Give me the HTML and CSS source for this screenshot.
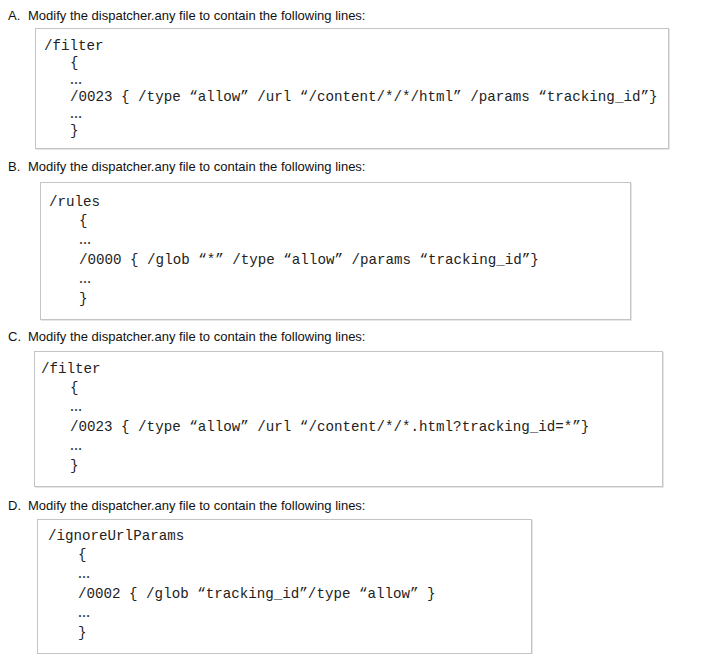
FILE: index.html
```html
<!DOCTYPE html>
<html>
<head>
<meta charset="utf-8">
<link rel="stylesheet" href="styles.css">
</head>
<body>
<div class="options">
  <div class="option option-a">
    <div class="label"><span class="letter">A.</span><span>Modify the dispatcher.any file to contain the following lines:</span></div>
    <div class="code">
      <div class="line">/filter</div>
      <div class="line in">{</div>
      <div class="line in dots">…</div>
      <div class="line in">/0023 { /type “allow” /url “/content/*/*/html” /params “tracking_id”}</div>
      <div class="line in dots">…</div>
      <div class="line in">}</div>
    </div>
  </div>
  <div class="option option-b">
    <div class="label"><span class="letter">B.</span><span>Modify the dispatcher.any file to contain the following lines:</span></div>
    <div class="code">
      <div class="line">/rules</div>
      <div class="line in">{</div>
      <div class="line in dots">…</div>
      <div class="line in">/0000 { /glob “*” /type “allow” /params “tracking_id”}</div>
      <div class="line in dots">…</div>
      <div class="line in">}</div>
    </div>
  </div>
  <div class="option option-c">
    <div class="label"><span class="letter">C.</span><span>Modify the dispatcher.any file to contain the following lines:</span></div>
    <div class="code">
      <div class="line">/filter</div>
      <div class="line in">{</div>
      <div class="line in dots">…</div>
      <div class="line in">/0023 { /type “allow” /url “/content/*/*.html?tracking_id=*”}</div>
      <div class="line in dots">…</div>
      <div class="line in">}</div>
    </div>
  </div>
  <div class="option option-d">
    <div class="label"><span class="letter">D.</span><span>Modify the dispatcher.any file to contain the following lines:</span></div>
    <div class="code">
      <div class="line">/ignoreUrlParams</div>
      <div class="line in">{</div>
      <div class="line in dots">…</div>
      <div class="line in">/0002 { /glob “tracking_id”/type “allow” }</div>
      <div class="line in dots">…</div>
      <div class="line in">}</div>
    </div>
  </div>
</div>
</body>
</html>
```
FILE: styles.css
```css
html, body {
  margin: 0;
  padding: 0;
  background: #ffffff;
}
body {
  font-family: "Liberation Sans", Arial, sans-serif;
  color: #111;
}
.options {
  padding: 9px 0 0 8px;
  display: flex;
  flex-direction: column;
}
.label {
  display: flex;
  font-size: 13px;
  line-height: 14px;
  height: 14px;
  color: #111;
}
.letter {
  width: 20px;
  flex: none;
}
.code {
  box-sizing: border-box;
  border: 1px solid #c4c4c4;
  box-shadow: 1px 1px 0 #e6e6e6;
  font-family: "Liberation Mono", "Courier New", monospace;
  font-size: 14.2px;
  color: #222;
  background: #fff;
}
.line {
  white-space: pre;
}
.dots {
  font-family: "Liberation Serif", "Times New Roman", serif;
  font-size: 12px;
  font-weight: bold;
  color: #333;
}
.option-a .code {
  margin: 5px 0 0 27px;
  width: 634px;
  height: 121px;
  padding: 9px 0 0 8px;
  line-height: 17px;
}
.option-a .in { padding-left: 26px; }
.option-b { margin-top: 11px; }
.option-b .code {
  margin: 8px 0 0 32px;
  width: 591px;
  height: 138px;
  padding: 9.5px 0 0 8px;
  line-height: 19.4px;
}
.option-b .in { padding-left: 30px; }
.option-c { margin-top: 10px; }
.option-c .code {
  margin: 7px 0 0 26px;
  width: 629px;
  height: 136px;
  padding: 7.5px 0 0 6px;
  line-height: 19.4px;
}
.option-c .in { padding-left: 29px; }
.option-d { margin-top: 12px; }
.option-d .code {
  margin: 6px 0 0 29px;
  width: 495px;
  height: 135px;
  padding: 6.5px 0 0 10px;
  line-height: 19.4px;
}
.option-d .in { padding-left: 30px; }
```
